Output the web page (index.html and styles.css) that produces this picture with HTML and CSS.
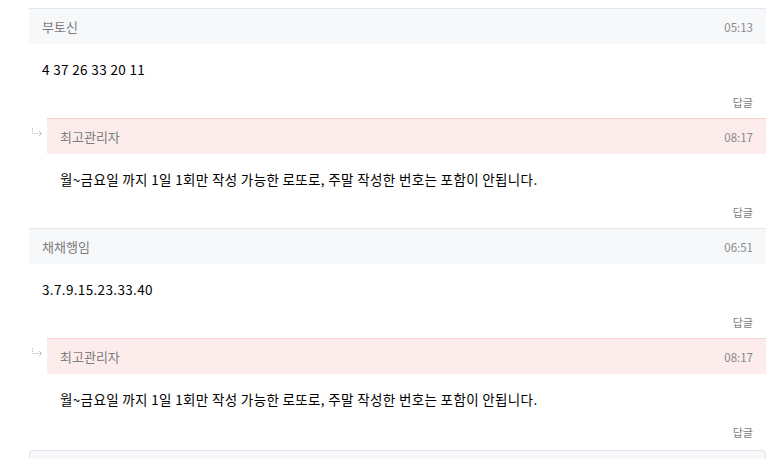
FILE: index.html
```html
<!DOCTYPE html>
<html>

<head>
    <title> 댓글 </title>
    <link rel="stylesheet" href="styles.css">
</head>

<body>
    <div id="comments">
        <div class="comment">
            <div class="head">
                <span class="name"> 부토신 </span>
                <span class="time"> 05:13 </span>
            </div>
            <div class="body">
                <p class="text"> 4 37 26 33 20 11 </p>
                <div class="reply-link"> 답글 </div>
            </div>
        </div>
        <div class="comment reply">
            <svg class="arrow" width="12" height="8" viewBox="0 0 12 8">
                <path d="M1.5 0 V5.5 H10" fill="none" stroke="#c4c4c4" stroke-width="1" stroke-dasharray="1.5 1" />
                <path d="M8 3 L10.5 5.5 L8 8" fill="none" stroke="#c4c4c4" stroke-width="1" />
            </svg>
            <div class="head">
                <span class="name"> 최고관리자 </span>
                <span class="time"> 08:17 </span>
            </div>
            <div class="body">
                <p class="text"> 월~금요일 까지 1일 1회만 작성 가능한 로또로, 주말 작성한 번호는 포함이 안됩니다. </p>
                <div class="reply-link"> 답글 </div>
            </div>
        </div>
        <div class="comment">
            <div class="head">
                <span class="name"> 채채행임 </span>
                <span class="time"> 06:51 </span>
            </div>
            <div class="body">
                <p class="text"> 3.7.9.15.23.33.40 </p>
                <div class="reply-link"> 답글 </div>
            </div>
        </div>
        <div class="comment reply">
            <svg class="arrow" width="12" height="8" viewBox="0 0 12 8">
                <path d="M1.5 0 V5.5 H10" fill="none" stroke="#c4c4c4" stroke-width="1" stroke-dasharray="1.5 1" />
                <path d="M8 3 L10.5 5.5 L8 8" fill="none" stroke="#c4c4c4" stroke-width="1" />
            </svg>
            <div class="head">
                <span class="name"> 최고관리자 </span>
                <span class="time"> 08:17 </span>
            </div>
            <div class="body">
                <p class="text"> 월~금요일 까지 1일 1회만 작성 가능한 로또로, 주말 작성한 번호는 포함이 안됩니다. </p>
                <div class="reply-link"> 답글 </div>
            </div>
        </div>
        <div id="write"></div>
    </div>
</body>

</html>
```

FILE: styles.css
```css
body {
    margin: 0;
    background: #ffffff;
    font: 13.5px "Noto Sans CJK KR", sans-serif;
    color: #000000;
}

#comments {
    margin: 8px 0 0 29px;
    width: 737px;
}

.comment {
    position: relative;
}

.head {
    display: flex;
    justify-content: space-between;
    align-items: center;
    height: 35px;
    padding: 0 13px;
    border-top: 1px solid #e3e6ea;
    background: #f7f8fa;
}

.name {
    font-size: 13px;
    color: #7d7d7d;
}

.time {
    font-size: 11.5px;
    color: #8a8a8a;
}

.body {
    padding: 15px 13px 7px;
}

.text {
    margin: 0;
    line-height: 20px;
    letter-spacing: 0.35px;
}

.reply-link {
    margin-top: 14px;
    text-align: right;
    line-height: 18px;
    font-size: 11px;
    color: #7d7d7d;
}

.reply {
    margin-left: 18px;
}

.reply .head {
    border-top-color: #f6cfcf;
    background: #fcecec;
}

.arrow {
    position: absolute;
    left: -16px;
    top: 10px;
}

#write {
    margin-top: 2px;
    height: 20px;
    border: 1px solid #e0e3e8;
    border-radius: 4px;
    background: #f7f8fa;
}
```
